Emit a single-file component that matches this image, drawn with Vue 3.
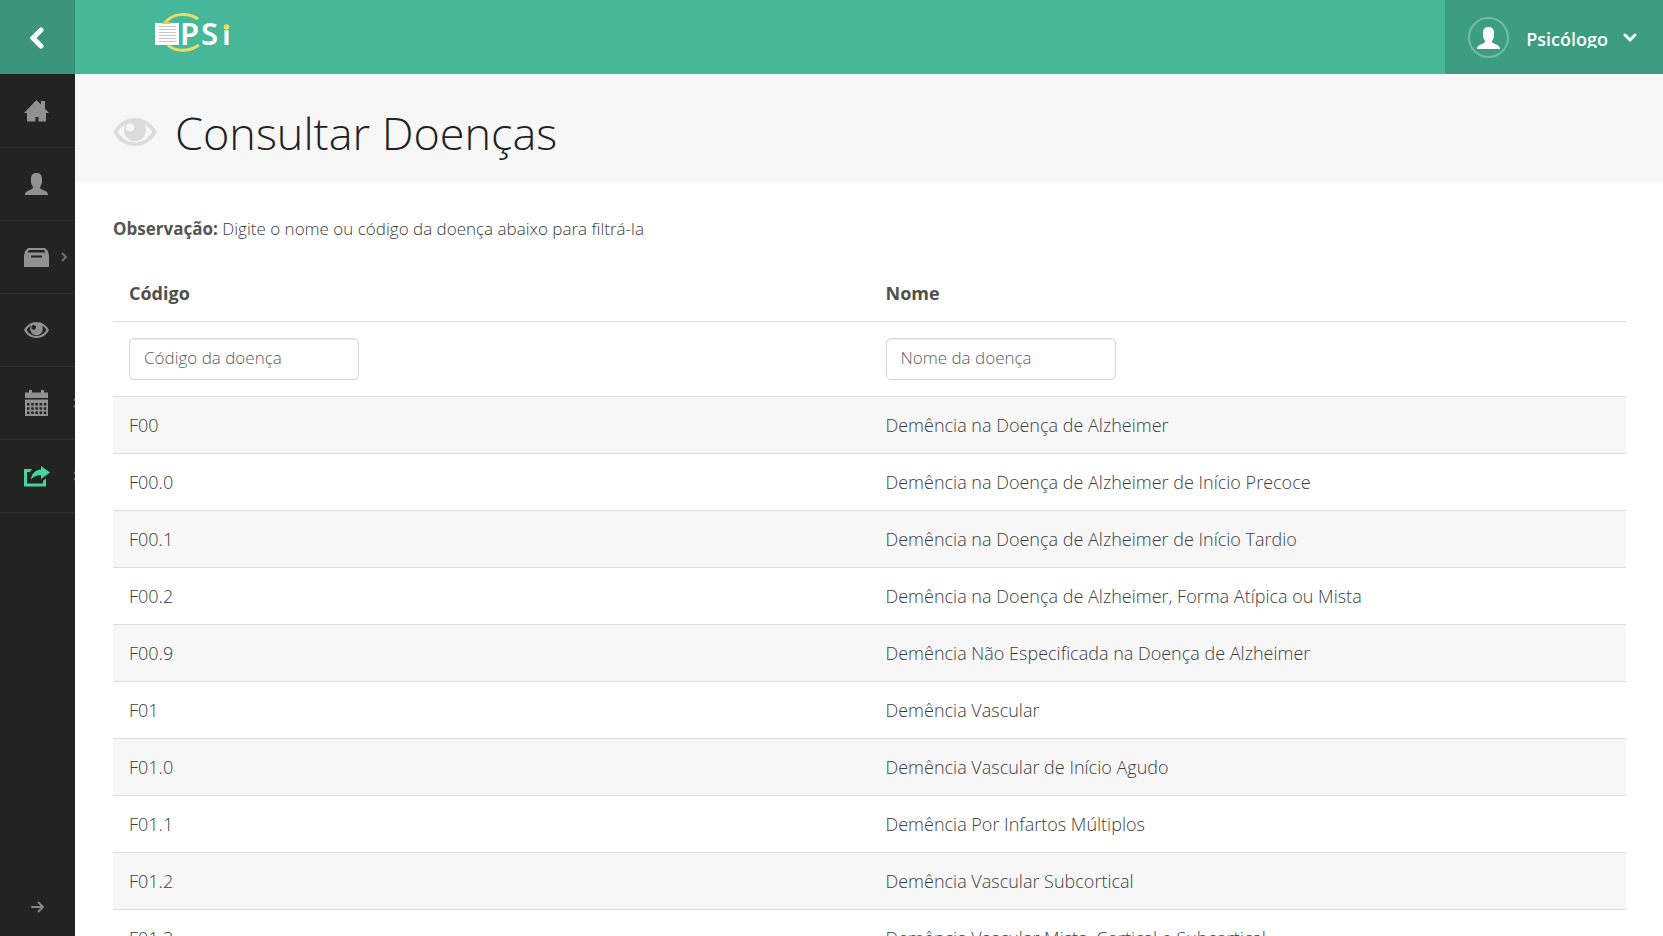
<script setup>
import { computed, ref } from 'vue'

const codeFilter = ref('')
const nameFilter = ref('')

const icons = {
  home: 'M0 13 12.500 0 17 4.600V1h4v7.700L25 13h-3v8.500h-7.500V17h-3v4.500H3V13Z',
  user: 'M12.500 0C16 0 18 2 18 5.500V9c0 2-1 3-1.500 4-1 2-.5 3 2 3.700C22 18 24 19 24 22H1c0-3 2-4 5.500-5.300 2.500-.7 3-1.700 2-3.700C8 12 7 11 7 9V5.500C7 2 9 0 12.500 0Z',
  drawer: 'M4 0h17l3 3 1 5v11H0V8l1-5ZM5 2 3.500 4.500h18L20 2ZM7 7.500v2h11v-2Z',
  eye: 'M12.500 0C18 0 22.500 3.500 25 8c-2.500 5-7 8-12.500 8S2.500 13 0 8C2.500 3.500 7 0 12.500 0ZM6.900 3.500C5 4.700 3.600 6.400 2.600 8c2.500 4 6 6 9.900 6s7.400-2 9.900-6c-1-1.600-2.400-3.300-4.300-4.500.5 1 .7 2.300.7 3.500a6.300 6.300 0 0 1-12.600 0C6.200 5.800 6.400 4.500 6.900 3.500ZM9.700 3.100a2.300 2.300 0 1 0 0 4.600 2.300 2.300 0 0 0 0-4.600Z',
  calendar: 'M1 2.500h4V0h3v2.500h9V0h3v2.500h4V8H1ZM1 9.500h23V26H1ZM3 13v2.500h2.500V13Zm4.200 0v2.500h2.500V13Zm4.200 0v2.500h2.500V13Zm4.200 0v2.500h2.500V13Zm4.200 0v2.500h2.500V13ZM3 17.200v2.500h2.500v-2.500Zm4.200 0v2.500h2.500v-2.500Zm4.200 0v2.500h2.500v-2.500Zm4.200 0v2.500h2.500v-2.500Zm4.200 0v2.500h2.500v-2.500ZM3 21.400v2.500h2.500v-2.500Zm4.200 0v2.500h2.500v-2.500Zm4.200 0v2.500h2.500v-2.500Zm4.200 0v2.500h2.500v-2.500Zm4.200 0v2.500h2.500v-2.500Z',
  share: 'M0 3h8L6 6H3v11.500h16V15l3-2.500v8H0ZM17 0l9 6.500-9 6.500V9.300c-4-.2-7 .8-10 4.200C7.500 8 11 4 17 3.500Z'
}

const menu = [
  { label: 'Início', icon: 'home', height: 22 },
  { label: 'Perfil', icon: 'user', height: 22 },
  { label: 'Cadastros', icon: 'drawer', height: 19, sub: 'near' },
  { label: 'Consultar', icon: 'eye', height: 16 },
  { label: 'Agenda', icon: 'calendar', height: 26, sub: 'far' },
  { label: 'Compartilhar', icon: 'share', height: 21, sub: 'far', active: true }
]

const diseases = [
  ['F00', 'Demência na Doença de Alzheimer'],
  ['F00.0', 'Demência na Doença de Alzheimer de Início Precoce'],
  ['F00.1', 'Demência na Doença de Alzheimer de Início Tardio'],
  ['F00.2', 'Demência na Doença de Alzheimer, Forma Atípica ou Mista'],
  ['F00.9', 'Demência Não Especificada na Doença de Alzheimer'],
  ['F01', 'Demência Vascular'],
  ['F01.0', 'Demência Vascular de Início Agudo'],
  ['F01.1', 'Demência Por Infartos Múltiplos'],
  ['F01.2', 'Demência Vascular Subcortical'],
  ['F01.3', 'Demência Vascular Mista, Cortical e Subcortical']
]

const rows = computed(() =>
  diseases.filter(
    ([code, name]) =>
      code.toLowerCase().includes(codeFilter.value.toLowerCase()) &&
      name.toLowerCase().includes(nameFilter.value.toLowerCase())
  )
)
</script>

<template>
  <div class="app">
    <aside class="sidebar">
      <button class="collapse" type="button" aria-label="Recolher menu">
        <svg width="15" height="22" viewBox="0 0 15 22"><path d="M11 3 3 11l8 8" fill="none" stroke="currentColor" stroke-width="5" stroke-linecap="round" /></svg>
      </button>
      <nav class="menu">
        <a v-for="item in menu" :key="item.icon" href="#" class="menu-item" :class="{ active: item.active }" :aria-label="item.label">
          <svg class="menu-icon" width="26" :height="item.height" :viewBox="`0 0 26 ${item.height}`"><path :d="icons[item.icon]" fill="currentColor" fill-rule="evenodd" /></svg>
          <svg v-if="item.sub" class="sub" :class="item.sub" width="7" height="10" viewBox="0 0 7 10"><path d="m1 1 4 4-4 4" fill="none" stroke="currentColor" stroke-width="2" /></svg>
        </a>
      </nav>
      <button class="expand" type="button" aria-label="Expandir menu">
        <svg width="14" height="12" viewBox="0 0 14 12"><path d="M1 6h11M7.500 1.500 12 6l-4.500 4.500" fill="none" stroke="currentColor" stroke-width="2" stroke-linecap="round" stroke-linejoin="round" /></svg>
      </button>
    </aside>

    <div class="page">
      <header class="topbar">
        <a class="brand" href="#" aria-label="PSi">
          <svg width="78" height="40" viewBox="0 0 78 40">
            <path d="M11 10C18 0 34-1 44 6M14 32c7 7 21 7 31 0" fill="none" stroke="#e8df68" stroke-width="3" />
            <path d="M1 10h24v22H1Z" fill="#fff" />
            <path d="M5 13.500h17M5 16.500h17M5 19.500h17M5 22.500h17M5 25.500h17M5 28.500h17" stroke="#c3c7c5" />
            <path d="M8 10c1-2 8-2 9 0v1H8Z" fill="#eac64b" />
            <text x="26" y="32" class="brand-text">P</text>
            <text x="47" y="32" class="brand-text">S</text>
            <text x="68" y="32" class="brand-text">i</text>
            <circle cx="72.500" cy="13" r="4.500" fill="#46b899" />
            <circle cx="72.500" cy="14" r="2.800" fill="#e9df5e" />
          </svg>
        </a>
        <button class="account" type="button">
          <span class="avatar">
            <svg width="25" height="22" viewBox="0 0 25 22"><path :d="icons.user" fill="currentColor" /></svg>
          </span>
          <span class="account-name">Psicólogo</span>
          <svg width="14" height="10" viewBox="0 0 14 10"><path d="m2 2 5 5 5-5" fill="none" stroke="currentColor" stroke-width="3" stroke-linecap="round" /></svg>
        </button>
      </header>

      <div class="heading">
        <svg width="44" height="28" viewBox="0 0 25 16"><path :d="icons.eye" fill="#dcdcdc" fill-rule="evenodd" /></svg>
        <h1>Consultar Doenças</h1>
      </div>

      <main class="content">
        <p class="note"><strong>Observação:</strong> Digite o nome ou código da doença abaixo para filtrá-la</p>
        <table>
          <thead>
            <tr><th scope="col">Código</th><th scope="col">Nome</th></tr>
          </thead>
          <tbody>
            <tr class="filters">
              <td><input v-model="codeFilter" type="text" placeholder="Código da doença" aria-label="Código da doença"></td>
              <td><input v-model="nameFilter" type="text" placeholder="Nome da doença" aria-label="Nome da doença"></td>
            </tr>
            <tr v-for="([code, name], i) in rows" :key="code" :class="{ striped: i % 2 === 0 }">
              <td>{{ code }}</td>
              <td>{{ name }}</td>
            </tr>
          </tbody>
        </table>
      </main>
    </div>
  </div>
</template>

<style>
body {
  margin: 0;
}
</style>

<style scoped>
.app {
  display: flex;
  height: 100vh;
  overflow: hidden;
  background: #fff;
  color: #3c3c3c;
  font-family: "Open Sans", "Noto Sans", sans-serif;
}
button {
  border: 0;
  padding: 0;
  font: inherit;
  cursor: pointer;
}
.sidebar {
  display: flex;
  flex-direction: column;
  flex: 0 0 75px;
  background: #232323;
  overflow: hidden;
}
.collapse {
  display: flex;
  align-items: center;
  justify-content: center;
  flex: 0 0 74px;
  padding-top: 2px;
  background: #3a957b;
  border-right: 1px solid #348b72;
  color: #fff;
}
.menu {
  flex: 1;
  padding-top: 1px;
}
.menu-item {
  display: flex;
  align-items: center;
  box-sizing: border-box;
  height: 73px;
  padding-left: 24px;
  border-bottom: 1px solid #303030;
  color: #909090;
  overflow: hidden;
}
.menu-icon,
.sub {
  flex: none;
}
.sub {
  color: #6c6c6c;
}
.near {
  margin-left: 11px;
}
.far {
  margin-left: 23px;
}
.active .menu-icon {
  color: #45d3a0;
}
.expand {
  display: flex;
  align-items: center;
  justify-content: center;
  height: 58px;
  background: none;
  color: #858585;
}
.page {
  flex: 1;
  min-width: 0;
  overflow: hidden;
}
.topbar {
  display: flex;
  justify-content: space-between;
  height: 74px;
  background: #46b899;
}
.brand {
  padding: 13px 0 0 79px;
}
.brand-text {
  fill: #fff;
  font-family: "Noto Sans", "Open Sans", sans-serif;
  font-size: 31px;
  font-weight: 600;
}
.account {
  display: flex;
  align-items: center;
  padding: 1px 26px 0 23px;
  background: #3c9d81;
  color: #fff;
}
.avatar {
  display: flex;
  align-items: center;
  justify-content: center;
  width: 37px;
  height: 37px;
  border: 2px solid #76bba7;
  border-radius: 50%;
}
.account-name {
  margin: 0 15px 0 17px;
  padding-top: 2px;
  font-size: 18px;
  font-weight: 600;
  line-height: 18px;
  overflow: hidden;
}
.heading {
  display: flex;
  align-items: center;
  gap: 18px;
  height: 108px;
  padding: 0 38px;
  background: #f7f7f7;
}
.heading svg {
  margin-bottom: 4px;
  margin-top: 12px;
}
h1 {
  margin: 10px 0 0;
  color: #222;
  font-size: 45px;
  font-weight: 300;
  line-height: 60px;
}
.content {
  padding: 34px 37px 0 38px;
}
.note {
  margin: 0 0 23px;
  font-size: 17px;
  font-weight: 340;
  line-height: 26px;
}
.note strong {
  color: #555;
  font-weight: 700;
}
table {
  width: 100%;
  table-layout: fixed;
  border-collapse: collapse;
  font-size: 18px;
  line-height: 24px;
}
th,
td {
  padding: 16px;
  border-bottom: 1px solid #dcdcdc;
  font-weight: 320;
  text-align: left;
}
th {
  color: #4f4f4f;
  font-weight: 700;
}
.filters td {
  line-height: 0;
}
.striped {
  background: #f7f7f7;
}
input {
  box-sizing: border-box;
  width: 230px;
  height: 42px;
  padding: 0 14px 4px;
  border: 1px solid #d5d5d5;
  border-radius: 5px;
  background: #fff;
  box-shadow: inset 0 1px 1px #eee;
  color: #444;
  font: 300 17px "Open Sans", "Noto Sans", sans-serif;
}
input::placeholder {
  color: #5c5c5c;
}
</style>
